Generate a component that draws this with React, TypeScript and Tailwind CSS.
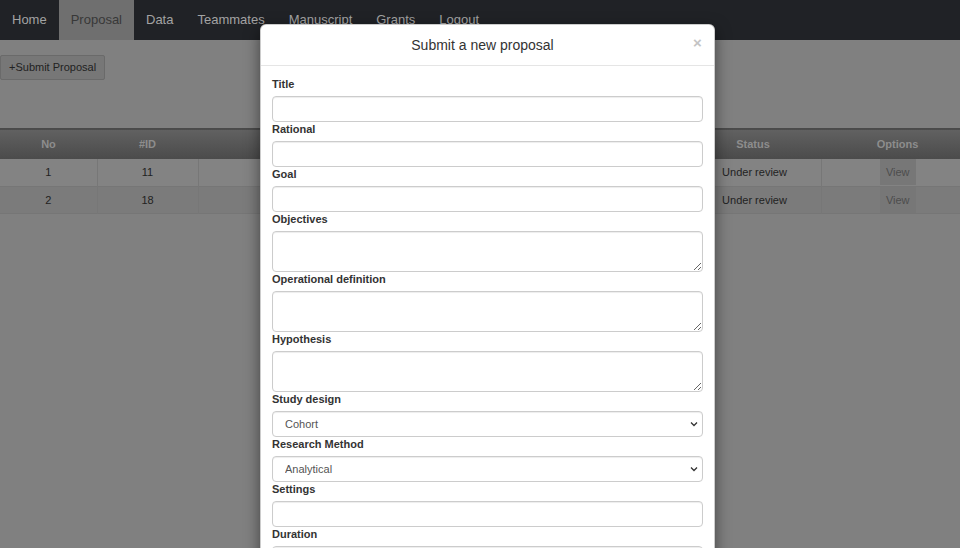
import React from "react";

const navItems = ["Home", "Proposal", "Data", "Teammates", "Manuscript", "Grants", "Logout"];

function Field({ label, kind = "input", value }: { label: string; kind?: "input" | "textarea" | "select"; value?: string }) {
  return (
    <div className="flex flex-col">
      <label className="block text-[11px] font-bold text-[#333] leading-[14px] mb-[5px]">{label}</label>
      {kind === "input" && (
        <input className="block h-[26px] w-full border border-[#ccc] rounded-[4px] shadow-[inset_0_1px_1px_rgba(0,0,0,0.075)] px-[12px] text-[11px] text-[#555] outline-none" />
      )}
      {kind === "textarea" && (
        <textarea className="h-[41px] w-full border border-[#ccc] rounded-[4px] shadow-[inset_0_1px_1px_rgba(0,0,0,0.075)] px-[12px] py-[4px] text-[11px] text-[#555] outline-none block" />
      )}
      {kind === "select" && (
        <div className="relative h-[26px]">
          <select className="block appearance-none h-[26px] w-full border border-[#ccc] rounded-[4px] shadow-[inset_0_1px_1px_rgba(0,0,0,0.075)] pl-[12px] text-[11px] text-[#555] outline-none bg-white" defaultValue={value}>
            <option>{value}</option>
          </select>
          <svg className="absolute right-[5px] top-[10px] pointer-events-none" width="8" height="6" viewBox="0 0 8 6">
            <path d="M1 1.5 L4 4.5 L7 1.5" fill="none" stroke="#333" strokeWidth="1.3" />
          </svg>
        </div>
      )}
    </div>
  );
}

export default function App() {
  return (
    <div className="relative w-[960px] h-[548px] overflow-hidden bg-[#808080] font-['Liberation_Sans',Arial,sans-serif]">
      <nav className="h-10 bg-[#202226] flex items-stretch text-[13px]">
        {navItems.map((n) => (
          <div
            key={n}
            className={
              n === "Proposal"
                ? "px-3 flex items-center bg-[#6f6f6f] text-[#383838]"
                : "px-3 flex items-center text-[#a3a3a3]"
            }
          >
            {n}
          </div>
        ))}
      </nav>

      <div className="pt-[15px]">
        <button className="block h-[25px] px-[8px] text-[11px] text-[#222] bg-[#777] border border-[#6a6a6a] rounded-[2px]">
          +Submit Proposal
        </button>
      </div>

      <table className="mt-[48px] w-[960px] border-collapse text-[11px] table-fixed">
        <thead>
          <tr className="h-[30px] bg-gradient-to-b from-[#616161] to-[#4b4b4b] border-t border-[#4a4a4a] text-[#8d8d8d] font-bold">
            <th className="w-[97px] font-bold text-center">No</th>
            <th className="w-[101px] font-bold text-center">#ID</th>
            <th className="w-[243px] font-bold text-center">Title</th>
            <th className="w-[244px] font-bold text-center">Date</th>
            <th className="w-[136px] font-bold text-center">Status</th>
            <th className="w-[139px] font-bold text-center pl-[14px]">Options</th>
          </tr>
        </thead>
        <tbody className="text-[#222]">
          {[
            { no: 1, id: 11, bg: "bg-[#838383]", h: "h-[28px]" },
            { no: 2, id: 18, bg: "bg-[#7b7b7b]", h: "h-[27px]" },
          ].map((r) => (
            <tr key={r.no} className={`${r.bg} ${r.h} border-b border-[#767676]`}>
              <td className="text-center border-r border-[#777]">{r.no}</td>
              <td className="text-center border-r border-[#777]">{r.id}</td>
              <td className="border-r border-[#777]"></td>
              <td className="border-r border-[#777]"></td>
              <td className="text-center border-r border-[#777] pl-[3px]">Under review</td>
              <td className="text-center pl-[14px]">
                <span className="inline-flex items-center justify-center h-[26px] w-[36px] bg-[#777] text-[#4d4d4d]">View</span>
              </td>
            </tr>
          ))}
        </tbody>
      </table>

      <div className="absolute left-[260px] top-[24px] w-[455px] bg-white rounded-[6px] border border-black/20 shadow-[0_5px_15px_rgba(0,0,0,0.5)]">
        <div className="h-[41px] flex items-center px-[11px] border-b border-[#e5e5e5]">
          <div className="flex-1 text-center text-[14px] text-[#333]">Submit a new proposal</div>
          <div className="w-[10px] text-[15px] font-bold text-[#c4c4c4] leading-none -mt-[6px]">×</div>
        </div>
        <div className="px-[11px] pt-[11px] pb-[15px] flex flex-col">
          <Field label="Title" />
          <Field label="Rational" />
          <Field label="Goal" />
          <Field label="Objectives" kind="textarea" />
          <Field label="Operational definition" kind="textarea" />
          <Field label="Hypothesis" kind="textarea" />
          <Field label="Study design" kind="select" value="Cohort" />
          <Field label="Research Method" kind="select" value="Analytical" />
          <Field label="Settings" />
          <Field label="Duration" />
        </div>
      </div>
    </div>
  );
}
